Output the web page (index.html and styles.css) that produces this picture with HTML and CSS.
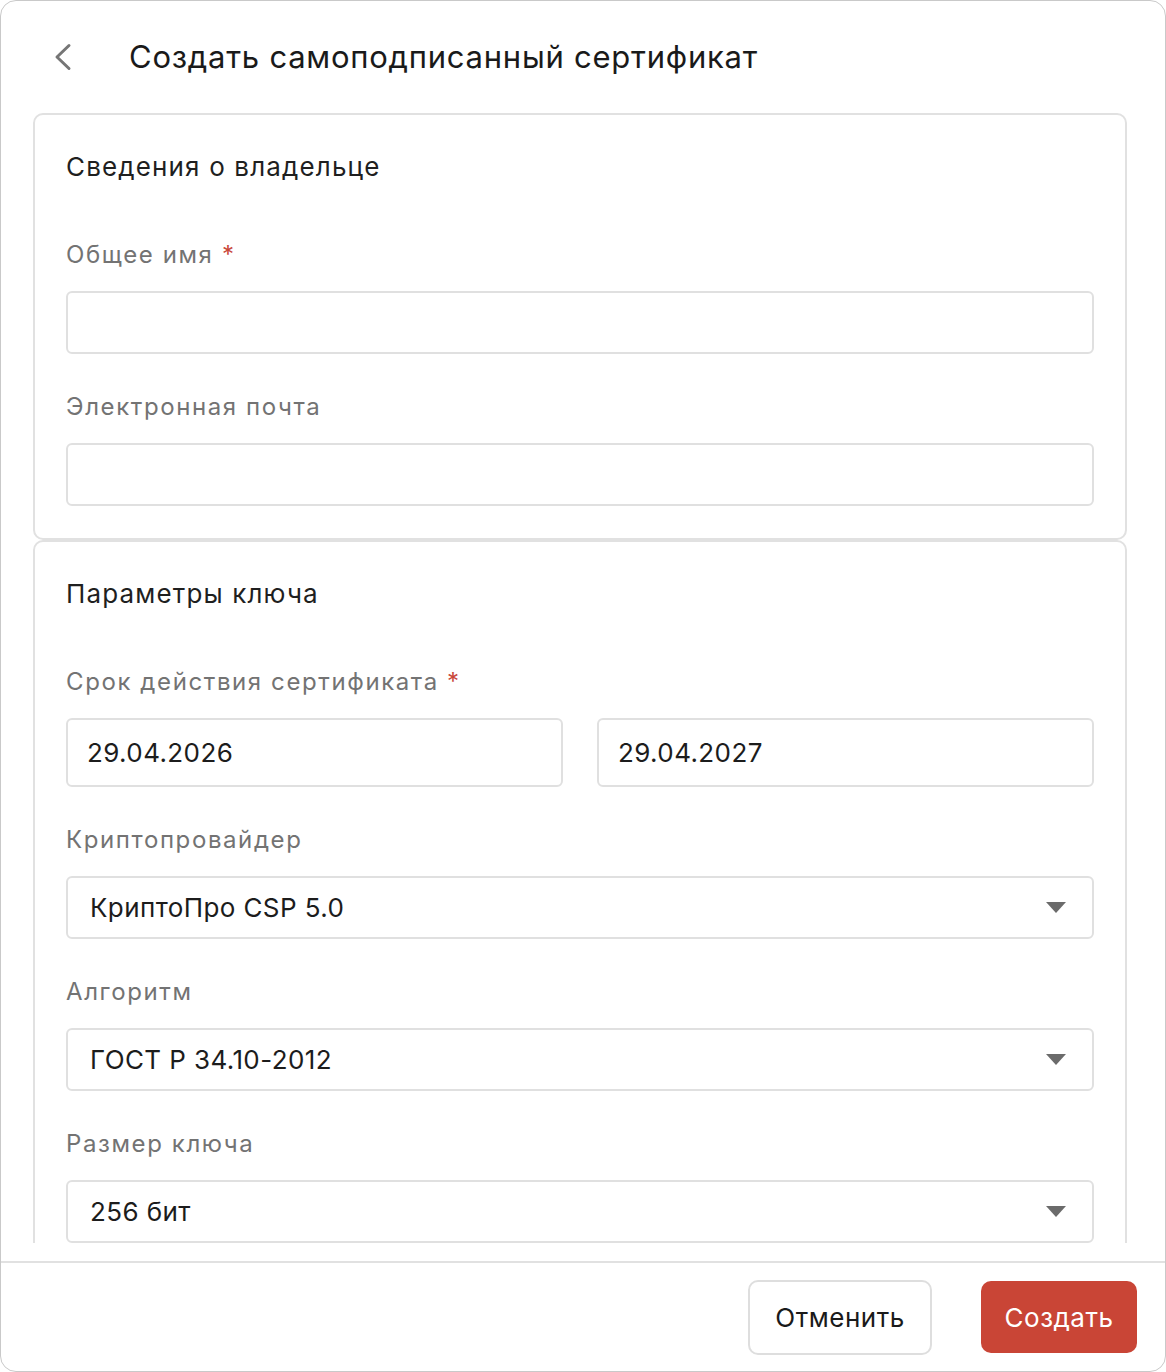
FILE: index.html
```html
<!DOCTYPE html>
<html lang="ru">
<head>
    <meta charset="UTF-8">
    <meta name="viewport" content="width=device-width, initial-scale=1.0">
    <title>Создать самоподписанный сертификат</title>
    <link rel="stylesheet" href="styles.css">
</head>
<body>
    <div class="dialog">
        <div class="dialog-header">
            <button class="back-button" aria-label="Назад">
                <svg width="20" height="28" viewBox="0 0 20 28">
                    <path d="M15 2.5 L3 14 L15 25.5" fill="none" stroke="#767676" stroke-width="3" stroke-linecap="round" stroke-linejoin="round"/>
                </svg>
            </button>
            <h1 class="dialog-title">Создать самоподписанный сертификат</h1>
        </div>

        <div class="dialog-body">
            <section class="card">
                <h2 class="card-title">Сведения о владельце</h2>

                <div class="field">
                    <label class="field-label">Общее имя <span class="required">*</span></label>
                    <input class="text-input" type="text">
                </div>

                <div class="field">
                    <label class="field-label">Электронная почта</label>
                    <input class="text-input" type="text">
                </div>
            </section>

            <section class="card">
                <h2 class="card-title">Параметры ключа</h2>

                <div class="field">
                    <label class="field-label">Срок действия сертификата <span class="required">*</span></label>
                    <div class="date-range">
                        <input class="text-input date-input" type="text" value="29.04.2026">
                        <input class="text-input date-input" type="text" value="29.04.2027">
                    </div>
                </div>

                <div class="field">
                    <label class="field-label">Криптопровайдер</label>
                    <div class="select">
                        <span>КриптоПро CSP 5.0</span>
                        <svg class="select-arrow" width="20" height="11" viewBox="0 0 20 11"><path d="M0 0 H20 L10 11 Z" fill="#6b6b6b"/></svg>
                    </div>
                </div>

                <div class="field">
                    <label class="field-label">Алгоритм</label>
                    <div class="select">
                        <span>ГОСТ Р 34.10-2012</span>
                        <svg class="select-arrow" width="20" height="11" viewBox="0 0 20 11"><path d="M0 0 H20 L10 11 Z" fill="#6b6b6b"/></svg>
                    </div>
                </div>

                <div class="field">
                    <label class="field-label">Размер ключа</label>
                    <div class="select">
                        <span>256 бит</span>
                        <svg class="select-arrow" width="20" height="11" viewBox="0 0 20 11"><path d="M0 0 H20 L10 11 Z" fill="#6b6b6b"/></svg>
                    </div>
                </div>
            </section>
        </div>

        <div class="dialog-footer">
            <button class="btn btn-secondary">Отменить</button>
            <button class="btn btn-primary">Создать</button>
        </div>
    </div>
</body>
</html>
```

FILE: styles.css
```css
* {
    box-sizing: border-box;
}

body {
    margin: 0;
    font-family: Inter, "Noto Sans", sans-serif;
    background-color: #ffffff;
    color: #1c1c1c;
}

.dialog {
    width: 1166px;
    height: 1372px;
    border: 1px solid #c9c9c9;
    border-radius: 16px;
    display: flex;
    flex-direction: column;
    overflow: hidden;
    background-color: #ffffff;
}

/* Header */
.dialog-header {
    height: 112px;
    flex-shrink: 0;
    display: flex;
    align-items: center;
    padding-left: 53px;
}

.back-button {
    border: none;
    background: none;
    padding: 0;
    width: 20px;
    height: 28px;
    display: flex;
    cursor: pointer;
}

.dialog-title {
    margin: 0 0 0 55px;
    font-size: 31px;
    font-weight: 400;
    line-height: 40px;
    letter-spacing: 0.75px;
    color: #1a1a1a;
}

/* Scrollable body */
.dialog-body {
    height: 1130px;
    flex-shrink: 0;
    overflow: hidden;
    padding: 0 38px 0 32px;
    margin-bottom: 18px;
}

.card {
    border: 2px solid #e1e1e1;
    border-radius: 10px;
    padding: 36px 31px 32px;
}

.card-title {
    margin: 0 0 57px;
    font-size: 26px;
    font-weight: 400;
    line-height: 32px;
    letter-spacing: 1.15px;
    color: #1f1f1f;
}

.field + .field {
    margin-top: 38px;
}

.field-label {
    display: block;
    font-size: 24px;
    line-height: 30px;
    letter-spacing: 1.6px;
    color: #737373;
    margin-bottom: 21px;
}

.required {
    color: #c9473a;
}

.text-input {
    display: block;
    width: 100%;
    height: 63px;
    border: 2px solid #e0e0e0;
    border-radius: 6px;
    padding: 0 19px;
    font-family: inherit;
    font-size: 26px;
    letter-spacing: 0.4px;
    color: #1c1c1c;
    background-color: #ffffff;
    outline: none;
}

.date-range {
    display: grid;
    grid-template-columns: 1fr 1fr;
    gap: 34px;
}

.date-input {
    height: 69px;
}

.select {
    height: 63px;
    border: 2px solid #e0e0e0;
    border-radius: 6px;
    padding: 0 26px 0 22px;
    display: flex;
    align-items: center;
    justify-content: space-between;
    font-size: 26px;
    letter-spacing: 0.4px;
    color: #1c1c1c;
}

.select-arrow {
    flex-shrink: 0;
}

/* Footer */
.dialog-footer {
    flex: 1;
    border-top: 2px solid #e1e1e1;
    display: flex;
    align-items: center;
    justify-content: flex-end;
    gap: 49px;
    padding-right: 28px;
}

.btn {
    font-family: inherit;
    font-size: 26px;
    letter-spacing: 0.5px;
    border-radius: 10px;
    cursor: pointer;
}

.btn-secondary {
    width: 184px;
    height: 75px;
    border: 2px solid #dedede;
    background-color: #ffffff;
    color: #1a1a1a;
}

.btn-primary {
    width: 156px;
    height: 72px;
    border: none;
    background-color: #c94536;
    color: #ffffff;
}
```
